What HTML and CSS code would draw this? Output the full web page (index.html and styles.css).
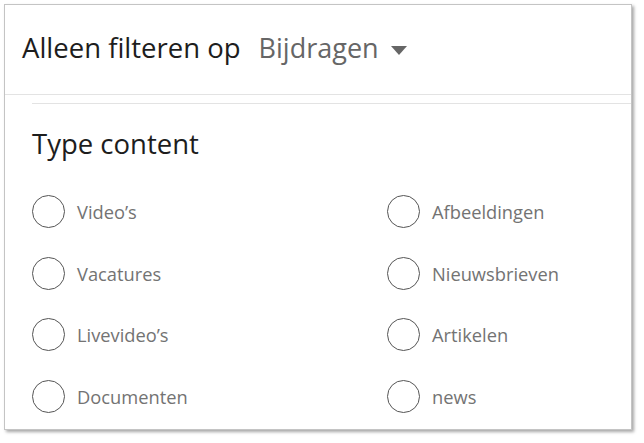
FILE: index.html
```html
<!DOCTYPE html>
<html lang="nl">
<head>
<meta charset="utf-8">
<link rel="stylesheet" href="styles.css">
</head>
<body>
<div class="card">
  <div class="header">
    <span class="title">Alleen filteren op</span>
    <span class="select">Bijdragen
      <svg class="caret" width="16" height="9" viewBox="0 0 16 9"><path d="M0 0H16L8 9Z" fill="#666"/></svg>
    </span>
  </div>
  <div class="section">
    <h2 class="section-title">Type content</h2>
    <div class="options">
      <label class="option"><span class="radio"></span><span class="label">Video’s</span></label>
      <label class="option"><span class="radio"></span><span class="label">Afbeeldingen</span></label>
      <label class="option"><span class="radio"></span><span class="label">Vacatures</span></label>
      <label class="option"><span class="radio"></span><span class="label">Nieuwsbrieven</span></label>
      <label class="option"><span class="radio"></span><span class="label">Livevideo’s</span></label>
      <label class="option"><span class="radio"></span><span class="label">Artikelen</span></label>
      <label class="option"><span class="radio"></span><span class="label">Documenten</span></label>
      <label class="option"><span class="radio"></span><span class="label">news</span></label>
    </div>
  </div>
</div>
</body>
</html>
```
FILE: styles.css
```css
html, body {
  margin: 0;
  padding: 0;
  background: #fff;
}
body {
  font-family: "Open Sans", "Noto Sans", sans-serif;
  width: 644px;
  height: 443px;
  overflow: hidden;
}
.card {
  box-sizing: border-box;
  margin: 4px 0 0 4px;
  width: 628px;
  height: 426px;
  border: 1px solid #c4c4c4;
  background: #fff;
  box-shadow: 2px 2px 3px rgba(0, 0, 0, 0.35);
  overflow: hidden;
}
.header {
  box-sizing: border-box;
  height: 90px;
  border-bottom: 1px solid #e3e3e3;
  padding: 0 0 4px 17px;
  display: flex;
  align-items: center;
  gap: 18px;
}
.title {
  font-size: 27.5px;
  color: #1d1d1d;
}
.select {
  font-size: 27px;
  color: #666;
  display: flex;
  align-items: center;
  gap: 12px;
}
.caret {
  display: block;
  margin-top: 6px;
}
.section {
  margin: 8px 0 0 27px;
  border-top: 1px solid #e3e3e3;
}
.section-title {
  margin: 0;
  padding-top: 23px;
  font-size: 27.5px;
  font-weight: 400;
  color: #1d1d1d;
  line-height: 34px;
}
.options {
  display: grid;
  grid-template-columns: 355px 1fr;
  row-gap: 28.5px;
  margin-top: 34px;
}
.option {
  display: flex;
  align-items: center;
  gap: 12px;
  height: 33px;
}
.radio {
  box-sizing: border-box;
  width: 33px;
  height: 33px;
  border: 1.5px solid #555;
  border-radius: 50%;
  flex: none;
}
.label {
  font-size: 18.3px;
  color: #737373;
}
```
